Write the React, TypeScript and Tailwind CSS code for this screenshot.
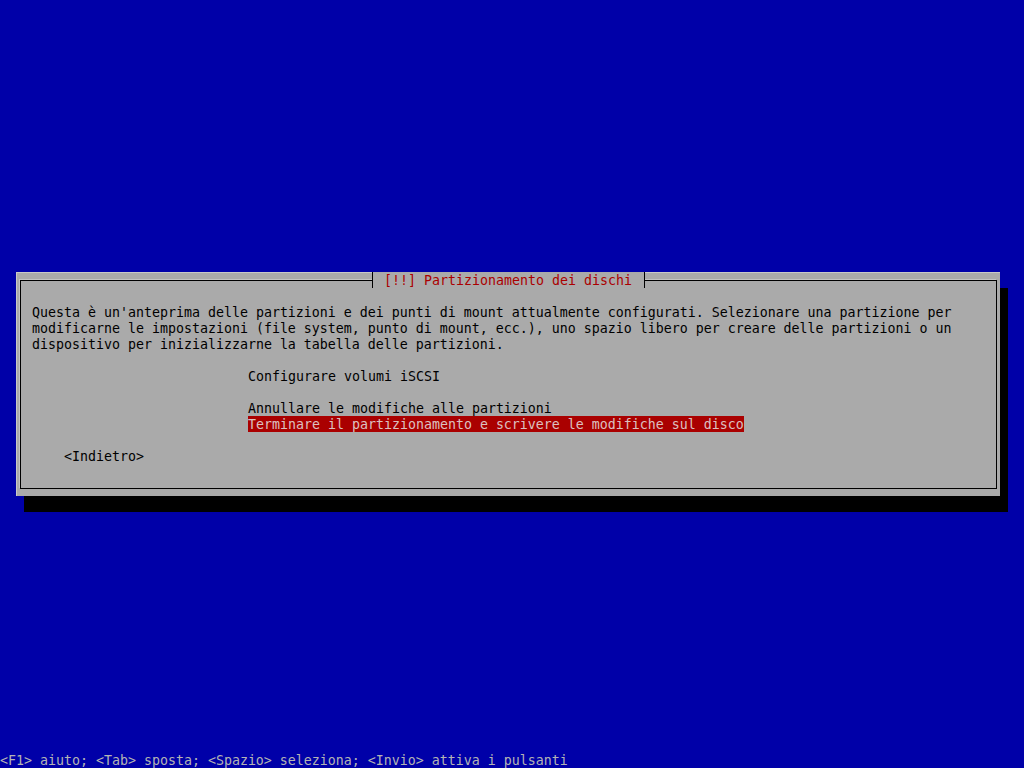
const paragraph = [
  "Questa è un'anteprima delle partizioni e dei punti di mount attualmente configurati. Selezionare una partizione per",
  "modificarne le impostazioni (file system, punto di mount, ecc.), uno spazio libero per creare delle partizioni o un",
  "dispositivo per inizializzarne la tabella delle partizioni.",
];

const Row = ({ children, className = "" }: { children?: React.ReactNode; className?: string }) => (
  <div className={`h-[16px] leading-[18px] whitespace-pre ${className}`}>{children}</div>
);

export default function App() {
  return (
    <div className="w-[1024px] h-[768px] bg-[#0000a8] flex flex-col overflow-hidden font-['DejaVu_Sans_Mono',monospace] text-[13.29px] antialiased">
      {/* Dialog */}
      <div className="mt-[272px] ml-[16px] w-[984px] h-[224px] bg-[#aaaaaa] shadow-[inset_1px_1px_0_#c8c8c8,8px_16px_0_0_#000] pt-[8px] pl-[4px] pr-[3px] pb-[7px] flex">
        <div className="relative flex-1 border border-black shadow-[-1px_-1px_0_#c4c4c4] pt-[23px] pl-[11px] flex flex-col text-black">
          {/* Title */}
          <div className="absolute left-[351px] top-[-9px] w-[273px] h-[16px] bg-[#aaaaaa] border-x border-black pl-[11px] leading-[18px] text-[#aa0000] whitespace-pre">
            [!!] Partizionamento dei dischi
          </div>

          {paragraph.map((line) => (
            <Row key={line}>{line}</Row>
          ))}
          <Row />
          <Row className="ml-[216px]">Configurare volumi iSCSI</Row>
          <Row />
          <Row className="ml-[216px]">Annullare le modifiche alle partizioni</Row>
          <Row className="ml-[216px]">
            <div className="w-[496px] h-[16px] bg-[#aa0000] text-[#dcc0c0]">
              Terminare il partizionamento e scrivere le modifiche sul disco
            </div>
          </Row>
          <Row />
          <Row className="ml-[32px]">{"<Indietro>"}</Row>
        </div>
      </div>

      <div className="flex-1" />

      {/* Help line */}
      <Row className="text-[#b4b4b4]">{"<F1> aiuto; <Tab> sposta; <Spazio> seleziona; <Invio> attiva i pulsanti"}</Row>
    </div>
  );
}
